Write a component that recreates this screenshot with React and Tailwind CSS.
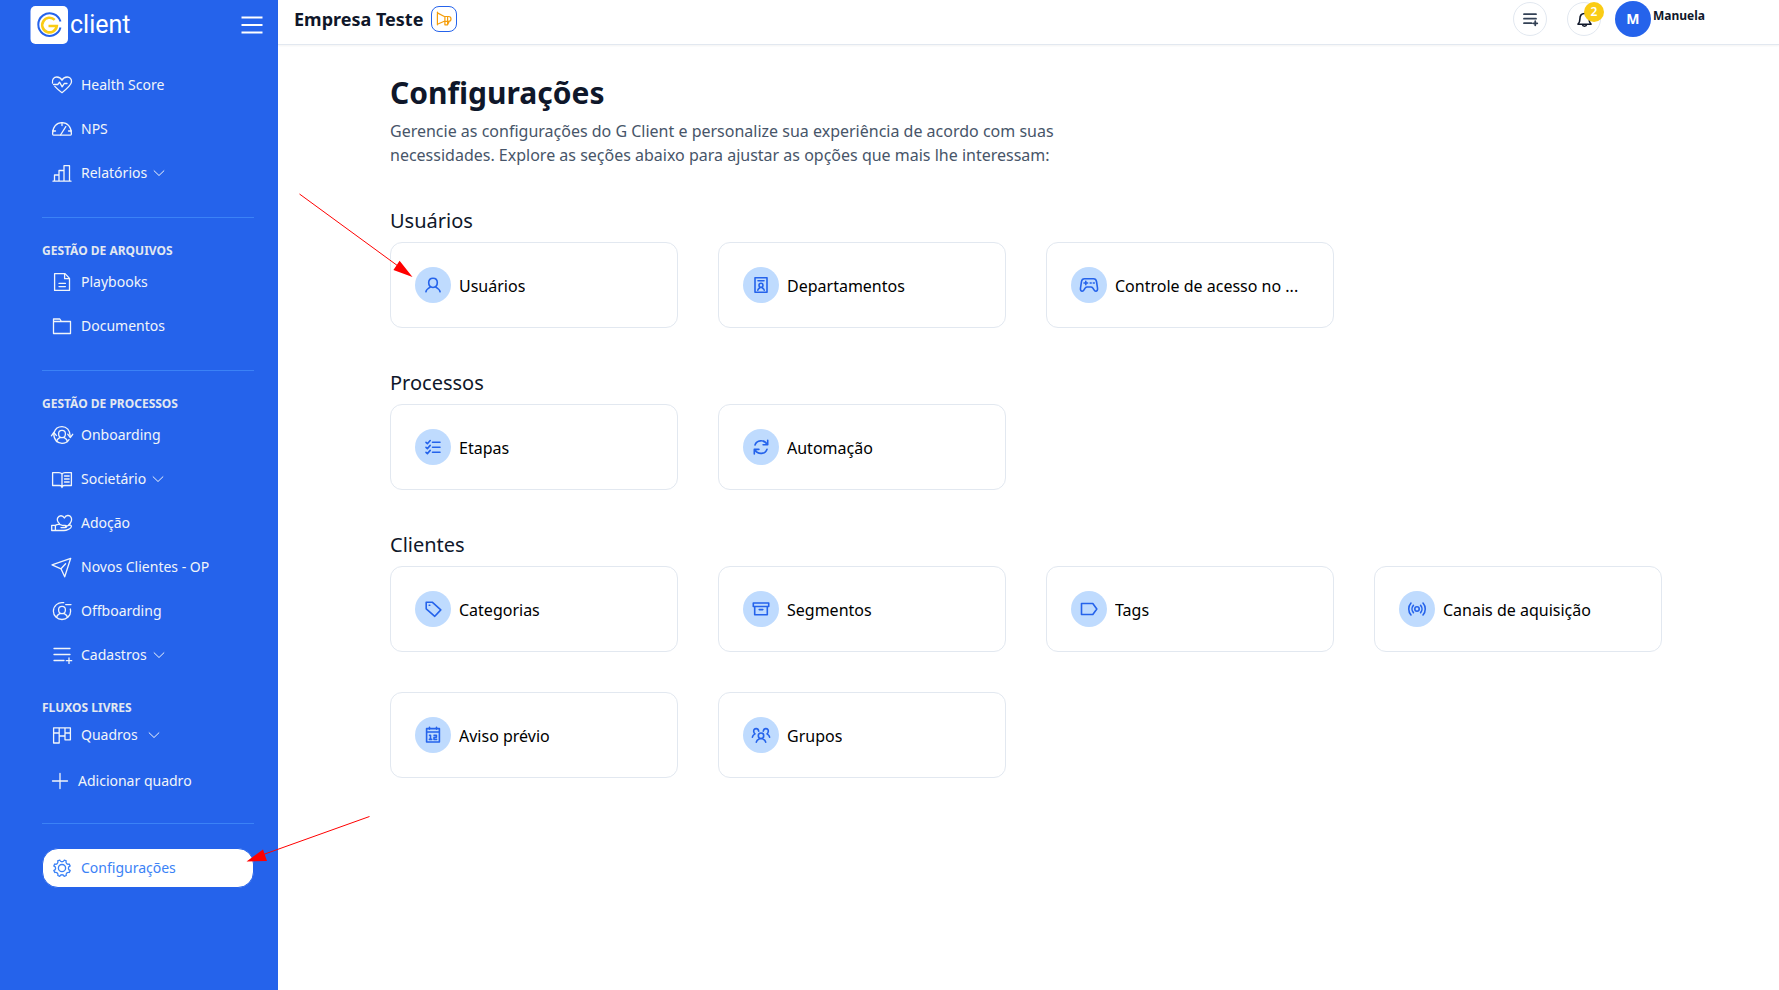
const shapes = {
  heart: (
    <>
      <path d="M2.500 10C1.800 6.500 4 4 6.800 4c2.300 0 4.200 1.200 5.200 3.200C13 5.200 15 4 17.200 4c2.800 0 4.600 2.200 4.300 5-.3 3-4 6.200-9.500 10.700C9 17.500 6.500 15.300 4.800 13.400" />
      <path d="M3.500 11.500h4.300l1.700-2.300 2.700 4.600 2-3.300h2.800" />
    </>
  ),
  gauge: (
    <>
      <path d="M3.600 18.200c-.7 0-1-.5-1-1.500C2.600 10 6.500 5.600 12 5.600S21.400 10 21.400 16.700c0 1-.3 1.500-1 1.500z" />
      <path d="M12 5.600v2.900M2.600 14h2.900M18.500 14h2.900M10.500 18l5.300-8.400" />
    </>
  ),
  bars: <path d="M3 20.200h18M4.500 20V14H9v6M9 14V9.500h5V20M14 9.500V4.700h5.500V20" />,
  file: (
    <>
      <path d="M4.600 3.600H15l4.500 4.800v12H4.600z" />
      <path d="M14.600 3.800v4.900h4.700M9 13.400h6.400M9 16.600h6.400" />
    </>
  ),
  folder: <path d="M3.500 7.500h17v12h-17zM3.500 8V5h6.300l1.700 2.500" />,
  onboarding: (
    <>
      <path d="M4.200 9.200C5.200 5.900 8.300 3.600 12 3.600c4.500 0 8.200 3.600 8.200 9.700M3.800 10.200c-.2 6.500 3.700 10.200 8.200 10.200 3 0 5.500-1.500 7-3.800" />
      <path d="M1.400 12.800l2.400-3.300 2.700 3.100M17.700 11.200l2.600 3.300 2.400-3.200" />
      <path d="M12 7.300c2.300 0 3.400 1.500 3.400 3.500 0 2.200-1.400 3.900-3.400 3.900s-3.400-1.700-3.400-3.900c0-2 1.100-3.500 3.400-3.500zM6.500 18.600c.3-2 1.500-3 3.500-4.200M17.500 18.600c-.3-2-1.500-3-3.500-4.200" />
    </>
  ),
  book: (
    <>
      <path d="M12 7c-.8-1-1.700-1.300-3-1.300H2.600v12.800h6.800c1.400 0 2.600.5 2.600 2.100 0-1.600 1.200-2.100 2.600-2.100h6.800V5.700H15c-1.300 0-2.200.3-3 1.300zM12 7v13.500" />
      <path d="M14.500 9h4.700M14.500 12h4.700M14.500 15h4.700" />
    </>
  ),
  hand: (
    <>
      <path d="M1.700 14.300h3.700v5.200H1.700zM5.400 14.500c1.500-1.200 3.300-1.500 5-.8l2.200.8h2.600c2 0 2 2.100 0 2.100H11M5.400 19.500H14c2 0 7.300-1.700 7.400-4 0-1.600-1.500-1.700-2.700-1.200l-3.200 1.200" />
      <path d="M9.500 12.800c-2.200-2.200-2.700-4-1.800-5.900C9 4.200 12.700 3.800 14.400 7c1.500-3.200 5.200-3.200 6.700-.7 1.200 2.500 0 5.500-2.700 8" />
    </>
  ),
  plane: <path d="M2 9.800L20.700 3.300 14.700 21.800 11 13.800zM11 13.800l4.600-5" />,
  offboarding: (
    <>
      <path d="M13.700 3.700C8 2.700 3.400 7 3.400 12.200c0 4.600 3.800 8.300 8.600 8.300s8.600-3.700 8.600-8.300c0-.8-.1-1.500-.3-2.200M15.700 5.600H21" />
      <path d="M12 7.300c2.300 0 3.400 1.500 3.400 3.500 0 2.200-1.400 3.900-3.400 3.900s-3.400-1.700-3.400-3.900c0-2 1.100-3.500 3.400-3.500zM6.500 18.400c.3-2 1.500-2.900 3.500-4M17.500 18.400c-.3-2-1.500-2.900-3.500-4" />
    </>
  ),
  listPlus: <path d="M4 5.500h16M4 11.500h16M4 17.500h10M16.300 17.700h5.400M19 15v5.400" />,
  board: (
    <path d="M3.600 4.800h16.800v12H15V13H9.200v7H3.600zM9.200 4.800V13M15 4.800V13M3.600 10h5.600M15 10h5.400" />
  ),
  gear: (
    <>
      <path d="M9.800 4.100a2.300 2.300 0 0 0 4.400 0l2 .8a2.300 2.300 0 0 0 3 3.100l1 2a2.300 2.300 0 0 0 0 4.500l-.9 2a2.300 2.300 0 0 0-3 3l-2.100.9a2.300 2.300 0 0 0-4.400 0l-2-.9a2.300 2.300 0 0 0-3-3l-1-2a2.300 2.300 0 0 0 0-4.500l.9-2a2.300 2.300 0 0 0 3-3.100z" />
      <circle cx="12" cy="12.100" r="3.600" />
    </>
  ),
  plus: <path d="M12 4.500v15M4.500 12h15" />,
  user: (
    <path d="M12 5.200c2.800 0 4.300 1.700 4.300 4.400 0 2.900-1.700 4.900-4.300 4.900s-4.300-2-4.300-4.900c0-2.700 1.500-4.400 4.300-4.400zM4.900 18.800c.4-2.400 2-3.400 4.800-4.900M19.100 18.800c-.4-2.400-2-3.400-4.800-4.900" />
  ),
  badge: (
    <>
      <path d="M6 4.700h12v14.600H6zM9 7.800h6" />
      <path d="M12 10.200c1.400 0 2 .8 2 2s-.8 2.200-2 2.200-2-1-2-2.200.6-2 2-2zM8.800 17.200c.2-1.300 1-1.900 2-2.500M15.200 17.200c-.2-1.300-1-1.900-2-2.500" />
    </>
  ),
  gamepad: (
    <>
      <path d="M7.500 5.800h9c1.700 0 2.700 1 3 2.700l1 6.500c.3 2-.4 3.200-1.700 3.200-1.600 0-1.900-1.800-3-3.200-.6-.8-1.200-1-2-1h-3.600c-.8 0-1.400.2-2 1-1.100 1.400-1.400 3.200-3 3.200-1.300 0-2-1.200-1.700-3.200l1-6.500c.3-1.700 1.300-2.700 3-2.700z" />
      <path d="M7 10h3.600M8.800 8.200v3.600M13.200 10h1M16.300 10h1" />
    </>
  ),
  checks: (
    <path d="M5 7.400l1.400 1.300L9.200 5.500M5 12.300l1.400 1.300 2.800-3.200M5 17.300l1.400 1.300 2.800-3.200M11.500 7.300H19M11.500 12.300H19M11.500 17.300H19" />
  ),
  refresh: (
    <path d="M6 10c1.500-5 9-5.800 12-.8M18.700 5.200v4.600h-4.600M18 14.200c-1.500 5-9 5.800-12 .8M5.300 19v-4.600h4.600" />
  ),
  tag: (
    <>
      <path d="M5.200 5.200h6l8.600 7.700-6 6.400-8.600-7.500z" />
      <path d="M8.200 8.300h.6" />
    </>
  ),
  archive: <path d="M4.300 6h15.400v3.500H4.300zM5.700 9.500h12.600v8.300H5.700zM10.200 12.600h3.600" />,
  label: <path d="M4.500 6.500h11.300l4 5.500-4 5.500H4.500z" />,
  signal: (
    <>
      <circle cx="12" cy="12" r="2.200" />
      <path d="M8.400 15.600c-1.800-2-1.800-5.200 0-7.200M15.600 15.600c1.800-2 1.800-5.200 0-7.200M6 18c-3-3.400-3-8.600 0-12M18 18c3-3.400 3-8.600 0-12" />
    </>
  ),
  calendar: (
    <>
      <path d="M5.600 5.600h12.800v13.400H5.600zM5.600 9h12.800M8.500 4.300v2M15.500 4.300v2" />
      <path d="M8.500 12.200h1V16.300M8.400 16.400h2.300M13 12.200h2.400v2.100H13v2.100h2.600" />
    </>
  ),
  group: (
    <path d="M12 10c1.900 0 2.700 1.200 2.700 2.700 0 1.700-1.100 2.900-2.700 2.900s-2.700-1.200-2.700-2.900c0-1.500.8-2.700 2.700-2.700zM7.300 19.200c.2-1.700 1.200-2.600 3.200-3.400M16.700 19.200c-.2-1.700-1.200-2.600-3.200-3.400M9.700 8.200C9.400 6.400 8.500 5.600 7.200 5.600c-1.900 0-2.800 1.500-2.400 3.300.2 1 .6 1.600 1.200 2-1.500.8-2.400 1.400-2.600 3.200M14.300 8.200c.3-1.800 1.200-2.600 2.500-2.600 1.900 0 2.800 1.500 2.400 3.300-.2 1-.6 1.600-1.200 2 1.500.8 2.400 1.400 2.600 3.200" />
  ),
  bell: (
    <path d="M6 17.200c1.600-1.400 1.900-3 1.900-5.200 0-3.500 1.800-5.500 4.600-5.500s4.600 2 4.600 5.500c0 2.200.3 3.800 1.900 5.200zM10.400 17.500c.2 2.300 4 2.300 4.200 0" />
  ),
  megaphone: (
    <path d="M5.400 5.200v12.600M5.400 5.900l6.900 3.600h4.300c3.200 0 3.200 4.800 0 4.800h-4.300L5.400 17.200M12.900 9.600v8.200h2.700V9.700M15.600 17.800l1.700-3.500" />
  ),
};

function Icon({ name, className = "size-6 stroke-[1.3]" }) {
  return (
    <svg
      viewBox="0 0 24 24"
      fill="none"
      stroke="currentColor"
      strokeLinecap="round"
      strokeLinejoin="round"
      aria-hidden="true"
      className={`shrink-0 ${className}`}
    >
      {shapes[name]}
    </svg>
  );
}

function Chevron() {
  return (
    <svg viewBox="0 0 12 12" fill="none" stroke="currentColor" className="size-3 shrink-0" aria-hidden="true">
      <path d="M.8 3.500L6 8.500l5.200-5" />
    </svg>
  );
}

function NavItem({ icon, label, menu, active }) {
  const tone = active
    ? "border-[#2563eb] bg-white text-[#3b82f6]"
    : "border-transparent text-[#f1f5f9]";
  const row = `flex h-10 w-full items-center rounded-2xl border px-[7px] text-sm ${tone}`;
  const body = (
    <>
      <Icon name={icon} />
      <span className="ml-[7px]">{label}</span>
    </>
  );
  return (
    <li>
      {menu ? (
        <button type="button" aria-expanded="false" className={row}>
          {body}
          <span className={menu === "wide" ? "ml-2.5" : "ml-1.5"}>
            <Chevron />
          </span>
        </button>
      ) : (
        <a href="#" aria-current={active ? "page" : undefined} className={row}>
          {body}
        </a>
      )}
    </li>
  );
}

function Divider() {
  return <hr className="my-6 border-t border-[#3b82f6]" />;
}

function NavHeading({ children }) {
  return (
    <h2 className="text-xs leading-[18px] font-bold text-[#e2e8f0] uppercase">{children}</h2>
  );
}

function Sidebar() {
  return (
    <aside className="w-[278px] shrink-0 bg-[#2563eb]">
      <div className="flex items-center pt-1.5 pr-3.5 pl-[30px]">
        <a href="#" className="flex items-center gap-0.5 text-white">
          <svg viewBox="0 0 38 38" className="size-[38px]" aria-hidden="true">
            <rect x=".5" width="37.500" height="38" rx="5" fill="#fff" />
            <path d="M30.500 15.600A11.300 11.300 0 1 0 30.500 21.600" fill="none" stroke="#2563eb" strokeWidth="2" />
            <path
              d="M24.700 13.900A7.300 7.300 0 1 0 26.800 20H18.500"
              fill="none"
              stroke="#facc15"
              strokeWidth="2.600"
            />
          </svg>
          <span className="font-[Roboto,sans-serif] text-[25px] leading-9">client</span>
        </a>
        <button type="button" aria-label="Menu" className="ml-auto text-white">
          <svg viewBox="0 0 24 24" className="size-6" fill="none" stroke="currentColor" strokeWidth="1.800" aria-hidden="true">
            <path d="M1.500 4.500h21M1.500 12h21M1.500 19.500h21" />
          </svg>
        </button>
      </div>
      <nav className="px-6 pt-[21px] pl-[42px]">
        <ul className="flex flex-col gap-1">
          <NavItem icon="heart" label="Health Score" />
          <NavItem icon="gauge" label="NPS" />
          <NavItem icon="bars" label="Relatórios" menu="narrow" />
        </ul>
        <Divider />
        <NavHeading>Gestão de arquivos</NavHeading>
        <ul className="mt-0.5 flex flex-col gap-1">
          <NavItem icon="file" label="Playbooks" />
          <NavItem icon="folder" label="Documentos" />
        </ul>
        <Divider />
        <NavHeading>Gestão de processos</NavHeading>
        <ul className="mt-0.5 mb-6 flex flex-col gap-1">
          <NavItem icon="onboarding" label="Onboarding" />
          <NavItem icon="book" label="Societário" menu="narrow" />
          <NavItem icon="hand" label="Adoção" />
          <NavItem icon="plane" label="Novos Clientes - OP" />
          <NavItem icon="offboarding" label="Offboarding" />
          <NavItem icon="listPlus" label="Cadastros" menu="narrow" />
        </ul>
        <NavHeading>Fluxos livres</NavHeading>
        <ul className="-mt-0.5">
          <NavItem icon="board" label="Quadros" menu="wide" />
        </ul>
        <button type="button" className="mt-2 flex h-9 items-center gap-1.5 px-1.5 text-sm text-[#f1f5f9]">
          <Icon name="plus" />
          Adicionar quadro
        </button>
        <Divider />
        <ul>
          <NavItem icon="gear" label="Configurações" active />
        </ul>
      </nav>
    </aside>
  );
}

function Header() {
  return (
    <header className="flex h-[45px] items-start border-b border-[#e2e8f0] pl-4 shadow-xs">
      <div className="flex h-[38px] items-center gap-2">
        <span className="text-lg font-bold text-[#0f172a]">Empresa Teste</span>
        <button
          type="button"
          aria-label="Novidades"
          className="flex size-[26px] items-center justify-center rounded-lg border border-[#2563eb] text-[#f59e0b]"
        >
          <Icon name="megaphone" className="size-6 stroke-[1.2]" />
        </button>
      </div>
      <div className="ml-auto flex h-[38px] items-center pr-[74px]">
        <button
          type="button"
          aria-label="Adicionar à lista"
          className="flex size-[34px] items-center justify-center rounded-full border border-[#e2e8f0] text-[#334155]"
        >
          <Icon name="listPlus" className="size-[18px] stroke-[2.4]" />
        </button>
        <button
          type="button"
          aria-label="Notificações"
          className="relative ml-5 flex size-[34px] items-center justify-center rounded-full border border-[#e2e8f0] text-[#0f172a]"
        >
          <Icon name="bell" className="size-6 stroke-[1.6]" />
          <span className="absolute -top-px -right-1 flex size-5 items-center justify-center rounded-full bg-[#facc15] text-xs font-semibold text-white">
            2
          </span>
        </button>
        <div className="ml-3.5 flex size-9 items-center justify-center rounded-full bg-[#2563eb] text-sm font-bold text-white">
          M
        </div>
        <span className="ml-0.5 self-start pt-2 text-xs font-bold text-[#0f172a]">Manuela</span>
      </div>
    </header>
  );
}

const sections = [
  {
    title: "Usuários",
    cards: [
      ["user", "Usuários"],
      ["badge", "Departamentos"],
      ["gamepad", "Controle de acesso no ..."],
    ],
  },
  {
    title: "Processos",
    cards: [
      ["checks", "Etapas"],
      ["refresh", "Automação"],
    ],
  },
  {
    title: "Clientes",
    cards: [
      ["tag", "Categorias"],
      ["archive", "Segmentos"],
      ["label", "Tags"],
      ["signal", "Canais de aquisição"],
      ["calendar", "Aviso prévio"],
      ["group", "Grupos"],
    ],
  },
];

function Card({ icon, label }) {
  return (
    <a href="#" className="flex items-center gap-2 rounded-xl border border-[#e2e8f0] p-6 text-black">
      <span className="flex size-9 shrink-0 items-center justify-center rounded-full bg-[#bfdbfe] text-[#2563eb]">
        <Icon name={icon} className="size-6 stroke-[1.6]" />
      </span>
      <span className="truncate pt-0.5">{label}</span>
    </a>
  );
}

function Arrows() {
  return (
    <svg className="pointer-events-none absolute top-0 left-0 h-[900px] w-[420px]" viewBox="0 0 420 900" aria-hidden="true">
      <g stroke="#f00" strokeWidth="1">
        <path d="M299.500 194L398 266M369.500 816.500L262 855" />
      </g>
      <path d="M412.500 277L399.600 260.700 393.400 270zM246.500 861.500L263 849.500 267 861z" fill="#f00" />
    </svg>
  );
}

export default function App() {
  return (
    <div className="relative flex min-h-screen bg-white font-['Noto_Sans',sans-serif]">
      <Sidebar />
      <div className="min-w-0 flex-1">
        <Header />
        <main className="pt-[30px] pr-[117px] pb-10 pl-28">
          <h1 className="text-3xl font-bold text-[#0f172a]">Configurações</h1>
          <p className="mt-2 max-w-2xl text-[#475569]">
            Gerencie as configurações do G Client e personalize sua experiência de acordo com suas
            necessidades. Explore as seções abaixo para ajustar as opções que mais lhe interessam:
          </p>
          <div className="mt-[39px] flex flex-col gap-10">
            {sections.map((section) => (
              <section key={section.title}>
                <h2 className="text-xl leading-[30px] text-[#0f172a]">{section.title}</h2>
                <div className="mt-1.5 grid grid-cols-4 gap-10">
                  {section.cards.map(([icon, label]) => (
                    <Card key={label} icon={icon} label={label} />
                  ))}
                </div>
              </section>
            ))}
          </div>
        </main>
      </div>
      <Arrows />
    </div>
  );
}
